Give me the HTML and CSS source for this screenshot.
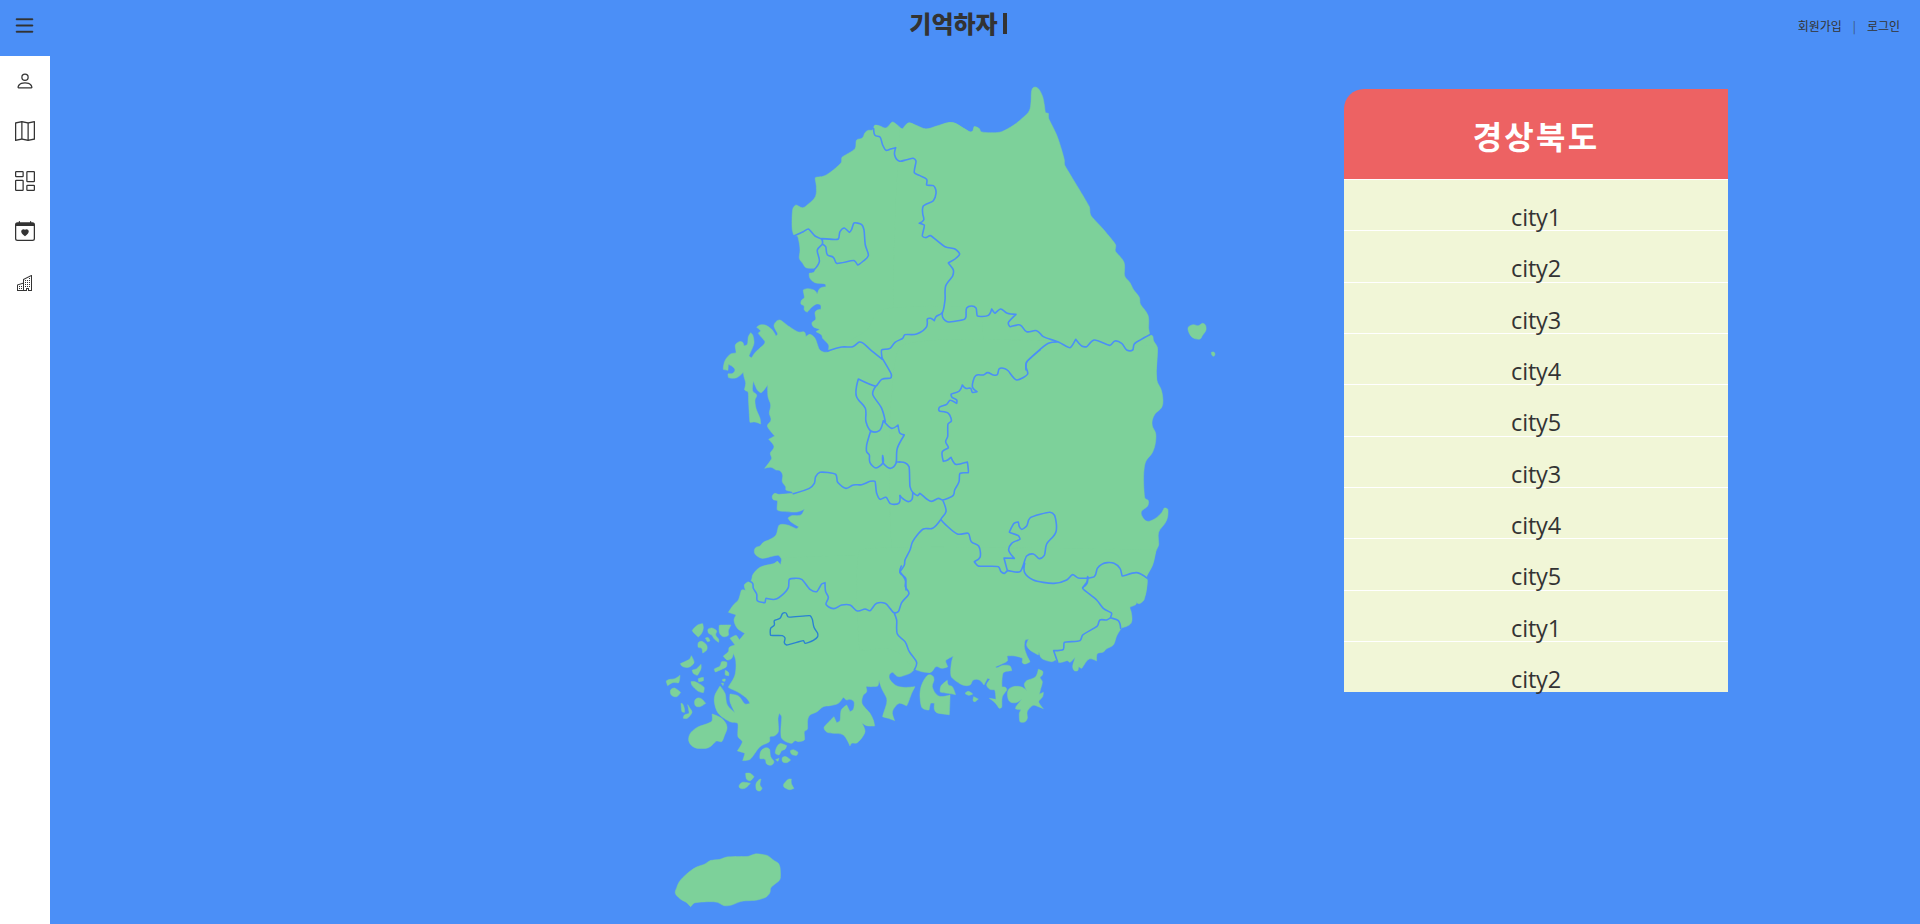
FILE: index.html
```html
<!DOCTYPE html>
<html lang="ko">
<head>
<meta charset="utf-8">
<title>기억하자</title>
<link rel="stylesheet" href="styles.css">
</head>
<body>
<header class="topbar">
  <button class="menu" aria-label="menu"><svg width="25" height="25" viewBox="0 0 16 16"><path d="M2.5 12a.5.5 0 0 1 .5-.5h10a.5.5 0 0 1 0 1H3a.5.5 0 0 1-.5-.5m0-4a.5.5 0 0 1 .5-.5h10a.5.5 0 0 1 0 1H3a.5.5 0 0 1-.5-.5m0-4a.5.5 0 0 1 .5-.5h10a.5.5 0 0 1 0 1H3a.5.5 0 0 1-.5-.5"/></svg></button>
  <h1 class="logo"><span>기억하자</span><i class="caret"></i></h1>
  <nav class="account"><a>회원가입</a><span class="divider">|</span><a>로그인</a></nav>
</header>
<div class="layout">
  <aside class="sidebar">
    <a><svg width="20" height="20" viewBox="0 0 16 16"><path d="M8 8a3 3 0 1 0 0-6 3 3 0 0 0 0 6m2-3a2 2 0 1 1-4 0 2 2 0 0 1 4 0m4 8c0 1-1 1-1 1H3s-1 0-1-1 1-4 6-4 6 3 6 4m-1-.004c-.001-.246-.154-.986-.832-1.664C11.516 10.68 10.289 10 8 10s-3.516.68-4.168 1.332c-.678.678-.83 1.418-.832 1.664z"/></svg></a>
    <a><svg width="20" height="20" viewBox="0 0 16 16"><path fill-rule="evenodd" d="M15.817.113A.5.5 0 0 1 16 .5v14a.5.5 0 0 1-.402.49l-5 1a.5.5 0 0 1-.196 0L5.5 15.01l-4.902.98A.5.5 0 0 1 0 15.5v-14a.5.5 0 0 1 .402-.49l5-1a.5.5 0 0 1 .196 0L10.5.99l4.902-.98a.5.5 0 0 1 .415.103M10 1.91l-4-.8v12.98l4 .8zm1 12.98 4-.8V1.11l-4 .8zm-6-.8V1.11l-4 .8v12.98z"/></svg></a>
    <a><svg width="20" height="20" viewBox="0 0 16 16"><path d="M6 1v3H1V1zM1 0a1 1 0 0 0-1 1v3a1 1 0 0 0 1 1h5a1 1 0 0 0 1-1V1a1 1 0 0 0-1-1zm14 12v3h-5v-3zm-5-1a1 1 0 0 0-1 1v3a1 1 0 0 0 1 1h5a1 1 0 0 0 1-1v-3a1 1 0 0 0-1-1zM6 8v7H1V8zM1 7a1 1 0 0 0-1 1v7a1 1 0 0 0 1 1h5a1 1 0 0 0 1-1V8a1 1 0 0 0-1-1zm14-6v7h-5V1zm-5-1a1 1 0 0 0-1 1v7a1 1 0 0 0 1 1h5a1 1 0 0 0 1-1V1a1 1 0 0 0-1-1z"/></svg></a>
    <a><svg width="20" height="20" viewBox="0 0 16 16"><path fill-rule="evenodd" d="M3.5 0a.5.5 0 0 1 .5.5V1h8V.5a.5.5 0 0 1 1 0V1h1a2 2 0 0 1 2 2v11a2 2 0 0 1-2 2H2a2 2 0 0 1-2-2V3a2 2 0 0 1 2-2h1V.5a.5.5 0 0 1 .5-.5M1 14a1 1 0 0 0 1 1h12a1 1 0 0 0 1-1V4H1z"/><path d="M8 6.993c1.664-1.711 5.825 1.283 0 5.132-5.825-3.85-1.664-6.843 0-5.132"/></svg></a>
    <a class="town"><svg width="16" height="16" viewBox="0 0 16 16"><path fill-rule="evenodd" d="M14.763.075A.5.5 0 0 1 15 .5v15a.5.5 0 0 1-.5.5h-3a.5.5 0 0 1-.5-.5V14h-1v1.5a.5.5 0 0 1-.5.5h-9a.5.5 0 0 1-.5-.5V10a.5.5 0 0 1 .342-.474L6 7.64V4.5a.5.5 0 0 1 .276-.447l8-4a.5.5 0 0 1 .487.022M6 8.694 1 10.36V15h5zM7 15h2v-1.5a.5.5 0 0 1 .5-.5h2a.5.5 0 0 1 .5.5V15h2V1.309l-7 3.5z"/><path d="M2 11h1v1H2zm2 0h1v1H4zm-2 2h1v1H2zm2 0h1v1H4zm4-4h1v1H8zm2 0h1v1h-1zm-2 2h1v1H8zm2 0h1v1h-1zm2-2h1v1h-1zm0 2h1v1h-1zM8 7h1v1H8zm2 0h1v1h-1zm2 0h1v1h-1zM8 5h1v1H8zm2 0h1v1h-1zm2 0h1v1h-1zm0-2h1v1h-1z"/></svg></a>
  </aside>
  <main class="stage">
    <svg class="map" width="570" height="844" viewBox="660 80 570 844">
      <!-- land -->
      <g class="land">
        <g transform="translate(700 80) scale(.33333)">
          <path d="M386 812 386 795 368 775 365 765 348 755 360 748 340 740 336 728 347 718 345 698 352 690 362 688 362 675 350 672 335 682 322 696 313 690 312 678 303 672 305 660 313 653 310 630 325 626 345 632 352 643 360 625 378 620 375 612 345 608 330 595 328 580 342 577 345 565 318 563 308 550 298 535 300 510 297 485 292 468 283 467 277 450 276 420 279 385 288 375 308 383 325 372 346 350 349 320 346 293 372 288 400 270 424 247 426 232 465 206 470 180 487 174 495 158 505 151 518 150 524 136 540 138 558 144 577 126 592 135 607 147 625 129 650 137 678 147 715 138 745 128 765 130 790 144 810 156 818 154 824 140 840 148 840 840 545 838Z"/>
        </g>
        <g transform="translate(900 80) scale(.33333)">
          <path d="M0 146 14 146 25 129 50 137 78 147 110 138 145 128 163 129 185 142 210 156 218 154 222 140 233 143 243 155 280 158 305 155 340 136 370 112 388 92 393 65 394 40 397 26 405 21 416 27 428 50 433 75 437 98 445 100 446 115 470 165 485 210 493 240 494 255 568 380 572 405 610 448 647 495 646 513 672 547 674 588 690 608 700 628 718 652 721 672 744 706 746 745 750 763 758 768 761 783 772 802 769 870 769 900 0 900Z"/>
          <path d="M866 740 880 734 895 737 908 730 916 735 918 750 907 767 900 777 882 775 870 764 864 748ZM934 817 941 816 945 822 942 829 936 826Z"/>
        </g>
        <g transform="translate(700 310) scale(.33333)">
          <path d="M386 125 370 126 358 118 345 85 330 73 318 80 313 66 295 66 265 48 240 30 228 35 222 48 233 72 228 78 215 58 195 45 180 45 170 52 182 62 175 70 195 95 192 103 165 128 155 143 147 138 162 100 158 75 152 68 145 80 142 103 132 108 128 97 118 95 106 105 108 128 92 132 75 152 70 178 84 181 85 163 98 170 105 180 98 190 84 192 86 203 110 203 130 187 132 200 137 220 134 240 144 246 146 280 150 337 165 336 182 342 180 325 168 295 165 270 170 255 158 243 160 213 172 240 183 248 192 240 203 224 204 260 212 285 208 310 213 330 202 348 224 378 206 388 222 410 211 430 215 445 194 475 213 472 228 480 240 482 248 495 247 515 257 530 258 540 275 545 280 550 235 553 225 550 217 558 220 569 232 572 232 600 250 604 290 606 313 598 303 615 275 617 264 624 272 635 296 650 290 656 262 645 238 645 228 675 210 688 190 697 180 708 166 714 164 730 185 745 235 736 247 755 240 766 232 755 215 765 185 772 165 788 154 812 155 818 140 820 134 830 140 845 840 860 840 0 540 0 500 60Z"/>
        </g>
        <g transform="translate(900 350) scale(.33333)">
          <path d="M770 -10 768 75 773 98 782 115 788 140 786 170 765 192 757 210 757 228 767 250 766 280 757 308 738 333 732 360 731 400 735 445 745 452 743 468 724 485 728 502 742 514 765 506 785 488 793 474 803 477 803 500 795 520 776 547 776 585 767 605 758 645 738 682 742 690 733 740 700 745 650 780 0 790 0 -10Z"/>
        </g>
        <g transform="translate(650 560) scale(.33333)">
          <path d="M640 405 636 430 660 460 670 480 674 498 650 497 635 488 645 515 622 548 605 550 600 558 580 525 550 520 530 516 522 503 537 485 552 470 560 488 570 482 574 450 590 435 600 455 610 448 612 425 600 418 590 420 580 412 565 430 540 437 520 440 500 456 480 465 473 480 472 508 463 515 463 540 445 545 435 542 425 550 395 535 395 470 388 460 384 475 385 515 374 527 360 530 358 545 330 560 300 598 278 602 284 580 262 573 277 545 264 530 263 490 240 485 205 460 193 425 195 405 210 378 225 400 232 435 255 458 240 425 240 402 265 408 285 432 300 430 290 415 265 397 235 382 255 345 257 300 250 280 245 295 232 300 220 288 235 275 238 262 255 255 240 235 258 226 268 240 284 220 262 205 252 180 258 165 235 157 250 135 265 120 275 90 290 92 283 75 295 65 305 62 308 45 330 22 375 10 382 3 392 15 398 -5 840 -5 840 338 797 328 780 340 750 350 740 348 728 337 719 343 718 355 735 375 760 382 795 380 785 400 770 437 748 430 730 448 727 460 734 482 715 475 698 470 710 430 710 415 695 385 687 360 683 378 648 380 650 395Z"/>
          <path d="M158 191 160 205 155 220 145 231 127 212 143 195ZM174 208 186 204 200 213 197 225 206 238 206 247 194 238 185 225 176 220ZM208 196 228 195 243 195 235 212 235 226 220 230 209 220ZM166 234 175 233 180 243 173 245ZM145 248 155 244 170 256 170 270 158 279 155 265 145 262ZM91 311 118 298 124 287 132 308 115 322 97 319ZM127 330 140 326 153 313 153 326 142 346 130 340ZM145 356 160 352 160 362 146 365ZM49 363 60 358 75 356 90 346 86 368 68 368 53 377ZM123 365 135 365 162 382 160 398 145 394 126 376ZM62 390 73 384 92 397 80 410 64 405ZM134 423 143 414 155 417 167 430 150 440 137 438ZM93 430 98 432 103 445 104 457 96 455ZM113 434 120 445 126 457 112 475 100 475 103 465 117 460ZM193 327 210 318 215 305 230 306 229 320 196 336ZM226 331 236 338 236 347 226 345ZM218 358 226 357 225 364 218 363ZM214 369 221 370 219 377ZM186 462 215 475 231 500 224 525 215 545 200 543 175 563 135 563 117 545 120 522 140 503 185 484ZM332 575 345 564 358 567 362 590 372 605 365 615 350 612 345 598 330 596ZM380 562 390 551 410 557 405 568 395 572 387 585 376 580ZM421 572 430 569 444 577 440 586 425 583ZM397 593 408 590 422 600 410 608 398 605ZM377 599 387 595 384 604ZM287 640 300 640 312 650 301 662 290 658ZM267 678 277 667 301 670 285 685 271 685ZM333 657 330 675 336 685 330 693 320 690 318 672 326 660ZM401 673 415 658 424 657 424 670 432 685 418 689 402 681Z"/>
        </g>
        <g transform="translate(860 550) scale(.33333)">
          <path d="M888 0 880 35 860 80 861 100 852 150 838 161 831 158 829 148 828 163 810 172 814 188 813 220 785 234 782 238 770 258 760 285 740 296 730 306 712 311 710 333 688 327 672 345 665 355 656 350 653 362 643 362 638 350 646 322 630 337 622 332 605 337 593 337 588 330 575 335 545 325 537 305 535 315 510 300 500 285 506 268 496 270 493 290 500 315 510 335 495 342 487 338 487 325 465 318 441 318 442 333 407 350 410 354 430 346 450 348 455 362 430 368 426 410 436 412 440 420 427 440 425 472 418 475 405 458 388 445 408 448 404 420 390 418 380 405 390 388 383 385 372 405 358 390 340 390 330 405 308 405 275 382 272 365 275 335 280 318 257 332 263 350 245 355 228 350 212 367 165 358 100 300 0 300 0 0Z"/>
          <path d="M205 375 218 378 222 390 217 410 236 438 270 435 268 494 230 488 223 478 223 460 212 460 207 480 187 474 180 440 182 415 192 390ZM262 391 265 405 277 410 287 434 265 430 241 426 243 408ZM315 430 325 424 338 432 325 436ZM341 440 355 447 345 455 339 452ZM535 358 548 364 547 375 540 383 547 395 541 420 538 433 550 427 548 440 536 455 550 476 535 470 520 466 502 484 502 505 494 516 480 515 478 490 483 480 467 477 468 470 486 447 468 458 450 455 443 440 445 420 460 410 485 411 500 422 493 403 500 392 527 380Z"/>
        </g>
        <g transform="translate(660 840) scale(.33333)">
          <path d="M50 143 58 125 80 102 108 82 135 72 150 62 180 58 200 51 265 49 285 42 305 43 323 47 340 60 355 70 360 82 360 118 345 132 332 144 330 157 320 170 292 180 250 183 235 187 215 195 193 197 172 187 150 185 103 189 92 200 80 188 60 176 46 160Z"/>
        </g>
      </g>
      <!-- province borders -->
      <g class="borders">
        <g transform="translate(700 80) scale(.33333)">
          <path d="M521 146 525 166 540 171 548 195 558 211 572 207 587 203 584 225 597 243 620 239 640 235 648 243 643 278 660 287 680 298 680 315 700 317 706 325 708 340 700 362 670 378 668 400 671 420 658 430 673 436 667 468 678 473 691 467 735 500 765 507 779 522 765 537 745 549 760 570 758 588 737 618 735 660 727 698 708 710 703 722 692 715 682 717 680 740 650 762 615 764 608 775 585 787 570 805 545 810 547 838 510 808 490 790 478 786 458 800 425 801 383 813"/>
          <path d="M281 468 310 455 325 447 345 468 365 478 367 492 352 510 358 545 342 570M365 476 415 477 420 455 433 444 448 457 455 448 462 429 485 434 492 450 496 495 505 527 490 543 473 555 463 542 410 550 400 532 382 524 377 500 367 492"/>
        </g>
        <g transform="translate(900 80) scale(.33333)">
          <path d="M127 698 128 712 136 722 145 726 193 718 198 710 200 684 215 678 228 684 232 708 265 706 275 687 285 700 302 687 322 700 348 703 325 728 330 740 360 735 380 755 410 752 430 770 475 786 510 803 527 778 545 798 560 800 582 780 630 796 645 783 665 790 680 810 698 810 703 792 752 763M475 786 445 790 380 846 378 870"/>
        </g>
        <g transform="translate(700 310) scale(.33333)">
          <path d="M547 145 574 193 572 204 545 208 528 228 475 207 469 258 496 295 498 335 513 363 538 362 550 332 575 355 594 345 600 370 613 375 592 415 588 460 572 475 560 470 549 458 548 437 549 458 528 474 510 458 508 435 500 425 500 405 512 363M528 228 518 252 545 295 556 335M600 557 598 578 583 583 570 580 558 562 540 568 530 550 525 514 510 514 485 524 460 525 438 535 418 522 412 515 407 493 360 487 347 500 343 520 328 535 280 551M600 785 615 808 618 840M588 456 600 456"/>
        </g>
        <g transform="translate(900 350) scale(.33333)">
          <path d="M420 0 380 36 378 50 383 72 350 90 325 63 315 56 298 56 292 74 280 75 263 68 250 75 228 76 219 95 218 113 231 125 217 127 212 115 197 115 187 105 178 123 154 132 156 142 170 150 170 160 150 151 140 163 118 172 118 183 145 190 154 213 144 222 143 260 137 275 145 293 127 305 130 334 143 330 153 322 167 343 202 336 205 368 180 370 177 395 164 420 160 436 128 450 115 445 95 454 80 447 60 430 53 437 38 427 30 410 27 350 15 338 -2 336M38 427 36 448 25 455 10 447 0 437M128 450 138 485 123 508 172 552 205 550 214 575 236 588 240 622 223 635 235 648 295 650 303 665 313 670 323 662 360 665 380 618 400 612 418 626 433 616 440 582 468 545 463 495 450 487 390 504 380 528 365 538 358 530 355 516 342 520 328 547 355 557 360 568 335 580 326 600 343 625 312 624 322 662M374 640 374 668 400 690 462 700 500 690 518 674 535 684 583 680 592 655 605 643 622 638 642 640 660 655 667 678 710 668 740 684M563 682 561 700 548 713M123 508 98 535 70 537 38 575 30 600 15 630 13 645 0 665"/>
        </g>
        <g transform="translate(650 560) scale(.33333)">
          <path d="M754 18 750 38 767 55 766 80 777 100 755 128 745 155 732 158 720 145 705 130 680 130 660 152 645 147 622 153 600 135 575 135 550 146 528 133 535 112 527 95 525 68 515 72 500 95 480 88 455 58 435 55 418 58 415 83 402 100 375 118 348 115 345 128 322 122 320 102 310 85 308 70 298 64M732 158 740 180 742 222 765 245 778 275 800 308 793 330"/>
          <path class="city" d="M362 226 362 205 373 195 373 182 390 175 398 160 408 159 415 171 480 167 487 178 492 202 503 220 503 230 490 241 465 250 460 242 410 255 403 248 405 234 397 227Z"/>
        </g>
        <g transform="translate(860 550) scale(.33333)">
          <path d="M683 80 681 95 668 115 710 150 730 175 755 190 752 203 775 212 782 235M752 203 740 210 720 210 712 228 668 255 660 272 613 277 610 298 581 302 593 337"/>
        </g>
      </g>
    </svg>
    <section class="panel">
      <h2 class="panel-title">경상북도</h2>
      <ul class="cities">
        <li>city1</li><li>city2</li><li>city3</li><li>city4</li><li>city5</li>
        <li>city3</li><li>city4</li><li>city5</li><li>city1</li><li>city2</li>
      </ul>
    </section>
  </main>
</div>
<script src="map.js"></script>
</body>
</html>
```

FILE: styles.css
```css
* { box-sizing: border-box; }
body {
  margin: 0;
  height: 100vh;
  display: flex;
  flex-direction: column;
  overflow: hidden;
  background: #4b8ff7;
  color: #333;
  font-family: "Open Sans", "Noto Sans CJK KR", sans-serif;
}
svg { display: block; fill: #333; }
.topbar {
  flex: none;
  height: 56px;
  display: grid;
  grid-template-columns: 1fr auto 1fr;
  align-items: start;
}
.menu { margin: 12.5px 0 0 12px; padding: 0; border: 0; background: none; width: 25px; }
.menu svg { stroke: #333; stroke-width: .25; }
.logo {
  display: flex;
  align-items: center;
  gap: 5px;
  height: 46px;
  margin: 0 0 0 -4px;
  font: 900 24px/46px "Noto Sans CJK KR", sans-serif;
}
.caret { width: 4px; height: 21px; margin-top: 1px; background: #333; }
.account {
  justify-self: end;
  display: flex;
  gap: 11px;
  margin: 17px 20px 0 0;
  font: 400 12px/17px "Noto Sans CJK KR", sans-serif;
}
.divider { font-weight: 300; }
.layout { flex: 1; min-height: 0; display: flex; }
.sidebar {
  width: 50px;
  background: #fff;
  display: flex;
  flex-direction: column;
}
.sidebar a { height: 50px; display: flex; align-items: center; justify-content: center; }
.sidebar .town { padding-top: 4px; }
.stage { flex: 1; display: flex; align-items: flex-start; padding: 24px 0 0 610px; }
.map { flex: none; }
.land { stroke: #7dd19a; stroke-width: 1.5; stroke-linejoin: round; fill: #7dd19a; }
.borders { fill: none; stroke: #4b8ff7; stroke-width: 4.8; stroke-linejoin: round; stroke-linecap: round; }
.borders .city { stroke: #2a82d2; stroke-width: 4.2; }
.panel { width: 384px; margin: 9px 0 0 114px; }
.panel-title {
  height: 90px;
  margin: 0;
  border-radius: 20px 0 0 0;
  background: #ed6263;
  color: #fff;
  text-align: center;
  font: 700 32px/92px "Noto Sans CJK KR", sans-serif;
  letter-spacing: 2.2px;
}
.cities { margin: 0; padding: 0; list-style: none; background: #f1f6d7; }
.cities li {
  height: 51.35px;
  padding-top: 21px;
  border-top: 1px solid #fff;
  text-align: center;
  font-size: 23.5px;
  line-height: 32px;
  letter-spacing: -.2px;
}
```

FILE: map.js
```javascript
// Rounds the coastline and border polylines; sharp corners keep their point.
function smooth(sub) {
  const closed = /Z/.test(sub);
  const n = sub.match(/-?[\d.]+/g).map(Number);
  const p = [];
  for (let i = 0; i < n.length; i += 2) p.push([n[i], n[i + 1]]);
  const at = i => closed ? p[(i + p.length) % p.length] : p[Math.max(0, Math.min(p.length - 1, i))];
  const handle = i => {
    const a = at(i - 1), b = at(i), c = at(i + 1);
    const u = [b[0] - a[0], b[1] - a[1]], v = [c[0] - b[0], c[1] - b[1]];
    const lu = Math.hypot(...u), lv = Math.hypot(...v);
    if (!lu || !lv) return [0, 0];
    const dot = (u[0] * v[0] + u[1] * v[1]) / (lu * lv);
    const k = Math.min(1, Math.max(0, dot + 0.15) * 1.6) * Math.min(lu, lv) * 0.36;
    const t = [u[0] / lu + v[0] / lv, u[1] / lu + v[1] / lv];
    const lt = Math.hypot(...t) || 1;
    return [t[0] / lt * k, t[1] / lt * k];
  };
  let d = `M${p[0]}`;
  const count = closed ? p.length : p.length - 1;
  for (let i = 0; i < count; i++) {
    const a = at(i), b = at(i + 1), h = handle(i), g = handle(closed ? (i + 1) % p.length : i + 1);
    d += `C${a[0] + h[0]} ${a[1] + h[1]} ${b[0] - g[0]} ${b[1] - g[1]} ${b[0]} ${b[1]}`;
  }
  return d + (closed ? 'Z' : '');
}
document.querySelectorAll('.map path').forEach(path => {
  const parts = path.getAttribute('d').match(/M[^M]+/g);
  path.setAttribute('d', parts.map(smooth).join(''));
});
```
